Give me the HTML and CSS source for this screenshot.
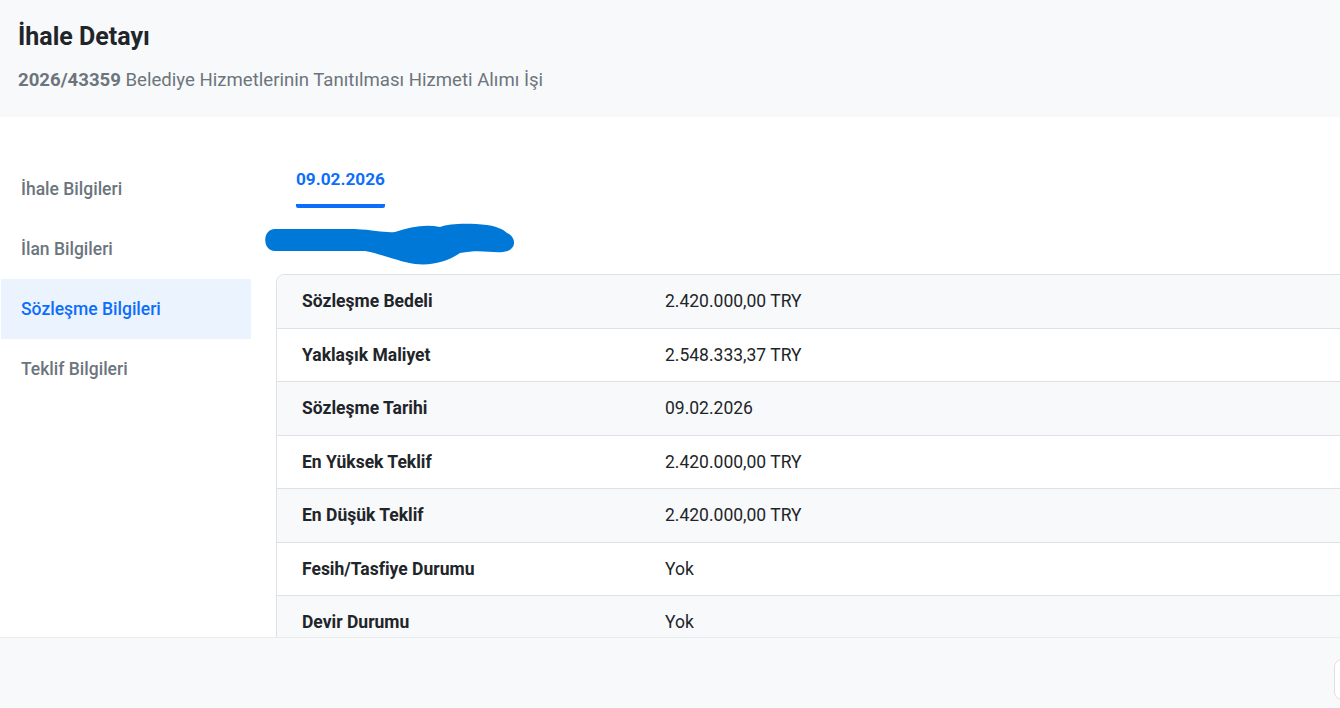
FILE: index.html
```html
<!DOCTYPE html>
<html lang="tr">
<head>
    <meta charset="UTF-8" />
    <meta name="viewport" content="width=device-width, initial-scale=1" />
    <title>İhale Detayı</title>
    <link rel="stylesheet" href="styles.css">
</head>
<body>
    <div class="modal">
        <header class="modal-header">
            <h1 class="title">İhale Detayı</h1>
            <p class="subtitle"><strong>2026/43359</strong> Belediye Hizmetlerinin Tanıtılması Hizmeti Alımı İşi</p>
        </header>
        <div class="modal-body">
            <nav class="side-nav">
                <a class="nav-item">İhale Bilgileri</a>
                <a class="nav-item">İlan Bilgileri</a>
                <a class="nav-item active">Sözleşme Bilgileri</a>
                <a class="nav-item">Teklif Bilgileri</a>
            </nav>
            <section class="content">
                <div class="tabs">
                    <span class="tab active">09.02.2026</span>
                </div>
                <svg class="redact" width="270" height="56" viewBox="0 0 270 56">
                    <path fill="#0078d7" d="M20,14 L100,14 C120,15 130,18 140,17 C155,12 170,9 185,12 C195,8 215,8 232,10 C245,12 250,16 252,18 C262,22 262,36 248,37 C235,38 225,34 205,38 C195,45 180,51 160,49 C145,47 130,40 110,36 L20,36 C7,36 7,14 20,14 Z"/>
                </svg>
                <table class="detail-table">
                    <colgroup><col class="col-label"><col></colgroup>
                    <tbody>
                        <tr><th>Sözleşme Bedeli</th><td>2.420.000,00 TRY</td></tr>
                        <tr><th>Yaklaşık Maliyet</th><td>2.548.333,37 TRY</td></tr>
                        <tr><th>Sözleşme Tarihi</th><td>09.02.2026</td></tr>
                        <tr><th>En Yüksek Teklif</th><td>2.420.000,00 TRY</td></tr>
                        <tr><th>En Düşük Teklif</th><td>2.420.000,00 TRY</td></tr>
                        <tr><th>Fesih/Tasfiye Durumu</th><td>Yok</td></tr>
                        <tr><th>Devir Durumu</th><td>Yok</td></tr>
                    </tbody>
                </table>
            </section>
        </div>
        <footer class="modal-footer">
            <button class="btn" aria-label="Kapat"></button>
        </footer>
    </div>
</body>
</html>
```
FILE: styles.css
```css
html, body { margin: 0; height: 100%; overflow: hidden; }
body { font-family: Roboto, "Liberation Sans", sans-serif; color: #212529; background: #fff; }
.modal { width: 1440px; height: 100vh; display: flex; flex-direction: column; }

.modal-header { background: #f8f9fa; padding: 23px 18px 25px; }
.title { margin: 0; font-size: 25px; line-height: 28px; font-weight: 700; color: #212529; }
.subtitle { margin: 17px 0 0; font-size: 18.6px; line-height: 24px; color: #6c757d; }
.subtitle strong { font-weight: 700; }

.modal-body { flex: 1; display: flex; overflow: hidden; min-height: 0; }

.side-nav { width: 250px; margin-left: 1px; padding-top: 42px; flex-shrink: 0; display: flex; flex-direction: column; }
.nav-item { height: 60px; display: flex; align-items: center; padding-left: 20px; font-size: 17.5px; font-weight: 500; color: #6c757d; }
.nav-item.active { background: #ebf3fe; color: #0d6efd; }

.content { flex: 1; margin-left: 25px; padding-top: 50px; }
.tabs { padding-left: 20px; display: flex; }
.tab { font-size: 17.2px; line-height: 24px; font-weight: 700; color: #0d6efd; padding-bottom: 13px; border-bottom: 4px solid #0d6efd; border-radius: 0 0 2px 2px; }
.redact { display: block; margin: 7px 0 0 -21px; }

.detail-table { width: 1100px; margin-top: 3px; border-collapse: separate; border-spacing: 0; border: 1px solid #dee2e6; border-radius: 8px 0 0 0; table-layout: fixed; }
.col-label { width: 363px; }
.detail-table th, .detail-table td { text-align: left; font-size: 17.5px; line-height: 24px; padding: 14.25px 25px; border-bottom: 1px solid #dee2e6; }
.detail-table th { font-weight: 700; color: #212529; }
.detail-table td { font-weight: 400; color: #212529; }
.detail-table tr:nth-child(odd) { background: #f8f9fa; }
.detail-table tr:first-child th { border-top-left-radius: 8px; }

.modal-footer { height: 71px; flex-shrink: 0; box-sizing: border-box; background: #f8f9fa; border-top: 1px solid #e9ecef; display: flex; justify-content: flex-end; align-items: flex-start; padding: 21px 16px 0; }
.btn { width: 90px; height: 41px; background: #fff; border: 1px solid #dee2e6; border-radius: 8px; font-family: inherit; font-size: 16px; color: #212529; }
```
